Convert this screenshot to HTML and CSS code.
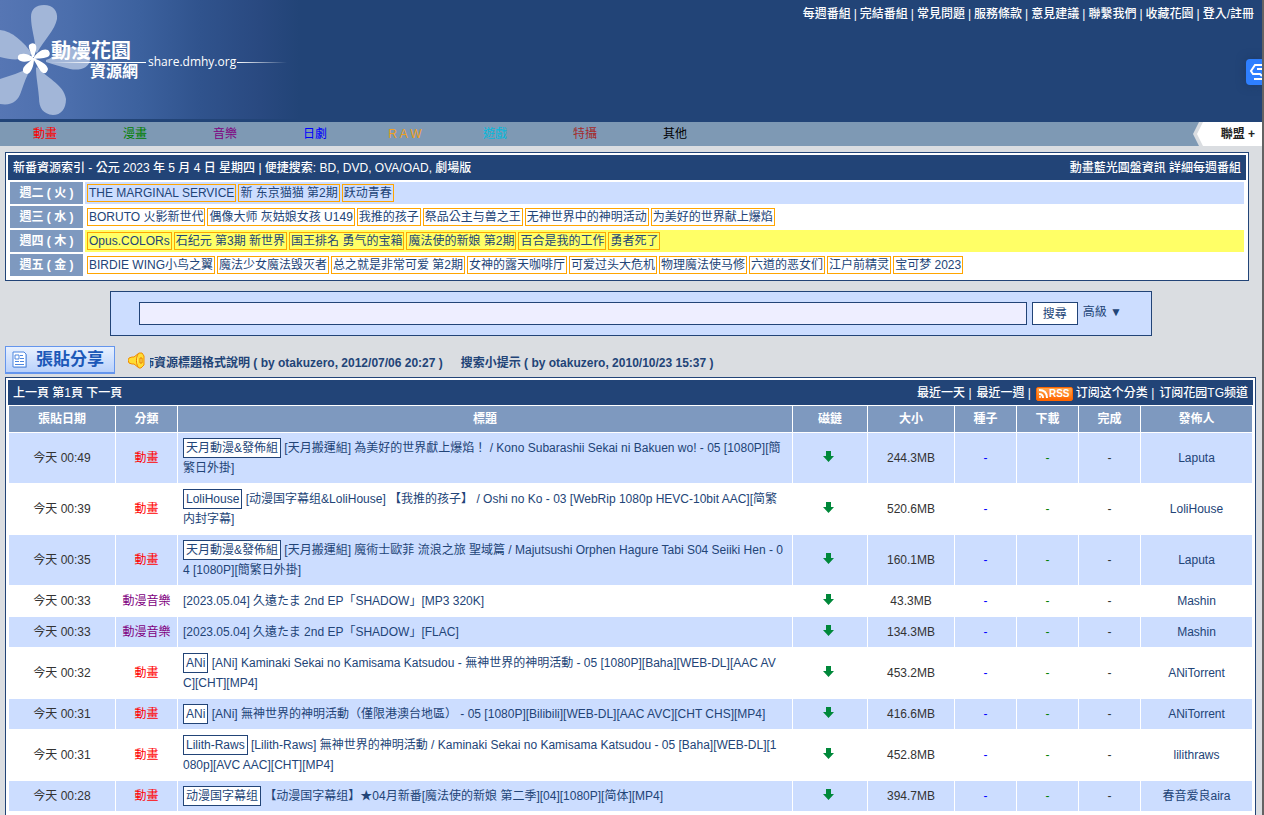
FILE: index.html
```html
<!DOCTYPE html>
<html lang="zh-Hant">
<head>
<meta charset="utf-8">
<title>動漫花園資源網</title>
<link rel="stylesheet" href="styles.css">
</head>
<body>
<header class="header">
  <a class="logo" href="#" aria-label="動漫花園資源網">
    <svg width="300" height="119" viewBox="0 0 300 119">
      <defs>
        <linearGradient id="fade"><stop offset="0" stop-color="#fff" stop-opacity="0"/><stop offset="1" stop-color="#fff"/></linearGradient>
        <linearGradient id="fadeout"><stop offset="0" stop-color="#fff"/><stop offset="1" stop-color="#fff" stop-opacity="0"/></linearGradient>
      </defs>
      <g fill="#a2b6d8">
        <path d="M36 52C35 38 31 28 31 17C31 9 36 5 44 5C53 5 58 11 57 19C55 30 44 40 37 53Z"/>
        <path d="M32 54C24 42 12 31 0 30V57C8 59 14 60 20 59Z"/>
        <path d="M29 68C21 72 10 76 0 79V104C12 106 18 101 21 92C24 83 27 75 31 68Z"/>
        <path d="M37 67C45 77 64 84 66 99C66 109 61 115 53 115C43 114 39 108 39 98C38 85 36 77 36 68Z"/>
        <path d="M46 60C56 57 62 46 74 47C84 48 90 54 90 60C89 68 80 71 70 69C61 67 53 64 46 62Z"/>
      </g>
      <g fill="#fff">
        <path d="M32 57C31 52 28 48 29 45Q32 42 35 44C38 47 35 53 34 57Z"/>
        <path d="M34 57C38 52 43 48 48 50Q51 53 49 56C45 59 39 58 34 59Z"/>
        <path d="M34 58C40 61 47 64 48 69Q47 74 43 73C39 71 37 64 33 59Z"/>
        <path d="M34 59C34 65 31 74 27 74Q22 73 23 69C24 65 30 62 33 58Z"/>
        <path d="M34 59C28 62 21 63 18 59Q17 54 22 54C27 53 31 56 34 58Z"/>
      </g>
      <rect x="48" y="62" width="44" height="1" fill="url(#fade)"/>
      <rect x="92" y="62" width="54" height="1" fill="#fff"/>
      <rect x="237" y="62" width="50" height="1" fill="url(#fadeout)"/>
      <text class="logo-name" x="51" y="58">動漫花園</text>
      <text class="logo-sub" x="90" y="77">資源網</text>
      <text class="logo-url" x="148" y="66">share.dmhy.org</text>
    </svg>
  </a>
  <nav class="toplinks"><a href="#">每週番組</a><span>|</span><a href="#">完結番組</a><span>|</span><a href="#">常見問題</a><span>|</span><a href="#">服務條款</a><span>|</span><a href="#">意見建議</a><span>|</span><a href="#">聯繫我們</a><span>|</span><a href="#">收藏花園</a><span>|</span><a href="#">登入/註冊</a></nav>
  <button class="float" aria-label="工具">
    <svg width="16" height="26" viewBox="0 0 16 26" fill="none" stroke="#fff" stroke-width="2"><path d="M16 6H9L5 12L7 15H14L16 17M16 20H8M16 10H11"/></svg>
  </button>
</header>
<nav class="menu">
  <a class="red" href="#">動畫</a><a class="green" href="#">漫畫</a><a class="purple" href="#">音樂</a><a class="blue" href="#">日劇</a><a class="orange" href="#">R A W</a><a class="cyan" href="#">遊戲</a><a class="brown" href="#">特攝</a><a class="black" href="#">其他</a>
  <a class="league" href="#"><span>聯盟 +</span></a>
</nav>

<section class="box index">
  <div class="bar"><div>新番資源索引 - 公元 2023 年 5 月 4 日 星期四 | 便捷搜索: <a href="#">BD</a>, <a href="#">DVD</a>, <a href="#">OVA/OAD</a>, <a href="#">劇場版</a></div><div><a href="#">動畫藍光圓盤資訊</a> <a href="#">詳細每週番組</a></div></div>
  <table class="week">
    <tr class="tinted"><th scope="row">週二 ( 火 )</th><td><div class="chips"><a href="#">THE MARGINAL SERVICE</a><a href="#">新 东京猫猫 第2期</a><a href="#">跃动青春</a></div></td></tr>
    <tr><th scope="row">週三 ( 水 )</th><td><div class="chips"><a href="#">BORUTO 火影新世代</a><a href="#">偶像大师 灰姑娘女孩 U149</a><a href="#">我推的孩子</a><a href="#">祭品公主与兽之王</a><a href="#">无神世界中的神明活动</a><a href="#">为美好的世界献上爆焰</a></div></td></tr>
    <tr class="today"><th scope="row">週四 ( 木 )</th><td><div class="chips"><a href="#">Opus.COLORs</a><a href="#">石纪元 第3期 新世界</a><a href="#">国王排名 勇气的宝箱</a><a href="#">魔法使的新娘 第2期</a><a href="#">百合是我的工作</a><a href="#">勇者死了</a></div></td></tr>
    <tr><th scope="row">週五 ( 金 )</th><td><div class="chips"><a href="#">BIRDIE WING小鸟之翼</a><a href="#">魔法少女魔法毁灭者</a><a href="#">总之就是非常可爱 第2期</a><a href="#">女神的露天咖啡厅</a><a href="#">可爱过头大危机</a><a href="#">物理魔法使马修</a><a href="#">六道的恶女们</a><a href="#">江户前精灵</a><a href="#">宝可梦 2023</a></div></td></tr>
  </table>
</section>

<form class="search">
  <input type="text" aria-label="搜尋關鍵字">
  <button type="button">搜尋</button>
  <a href="#">高級 ▼</a>
</form>

<div class="notice">
  <a class="share" href="#">
    <svg width="18" height="18" viewBox="0 0 18 18"><path d="M2 2H13L15 4V17H2Z" fill="#9db8e6"/><path d="M1 1H12L14 3V16H1Z" fill="#fff" stroke="#4c86e0"/><path d="M3 4H7V8H3ZM8 4.500H11M8 7.500H12M3 10.500H7M8 10.500H12M3 13.500H12" fill="none" stroke="#4c86e0"/></svg>
    <span>張貼分享</span>
  </a>
  <svg class="horn" width="17" height="17" viewBox="0 0 17 17"><path d="M1 6L4 5H6L11 1H14L16 4V13L13 16H11L6 12H4L1 11L0 8Z" fill="#fd3" stroke="#f08c00"/><path d="M10 2C8 6 8 11 10 15M12 6H14V11H12Z" fill="#fff36b" stroke="#e87800"/></svg>
  <div class="ticker"><a href="#">佈資源標題格式說明 ( by otakuzero, 2012/07/06 20:27 )</a><a href="#">搜索小提示 ( by otakuzero, 2010/10/23 15:37 )</a></div>
</div>

<main class="box list">
  <div class="bar"><div><a href="#">上一頁</a> 第1頁 <a href="#">下一頁</a></div>
    <div class="feeds"><span><a href="#">最近一天</a> |</span><span><a href="#">最近一週</a> |</span><span><a href="#"><span class="rss"><svg width="9" height="9" viewBox="0 0 9 9" fill="none" stroke="#fff" stroke-width="2"><path d="M0 1C5 1 8 4 8 9M0 5Q4 5 4 9"/><circle cx="1" cy="8" r="1" fill="#fff" stroke="none"/></svg>RSS</span> 订阅这个分类</a> |</span><a href="#">订阅花园TG频道</a></div></div>
  <table class="topics">
    <colgroup><col class="c-date"><col class="c-kind"><col><col class="c-magnet"><col class="c-size"><col class="c-num"><col class="c-num"><col class="c-num"><col class="c-user"></colgroup>
    <thead><tr><th>張貼日期</th><th>分類</th><th>標題</th><th>磁鏈</th><th>大小</th><th>種子</th><th>下載</th><th>完成</th><th>發佈人</th></tr></thead>
    <tbody>
      <tr><td>今天 00:49</td><td><a class="red" href="#">動畫</a></td><td class="title"><a class="tag" href="#">天月動漫&amp;發佈組</a> <a href="#">[天月搬運組] 為美好的世界獻上爆焰！ / Kono Subarashii Sekai ni Bakuen wo! - 05 [1080P][簡繁日外掛]</a></td><td><a class="magnet" href="#" aria-label="磁鏈"><svg width="11" height="11" viewBox="0 0 11 11"><path d="M3 0H8V5H11L5.500 11L0 5H3Z"/></svg></a></td><td>244.3MB</td><td class="blue">-</td><td class="green">-</td><td>-</td><td><a href="#">Laputa</a></td></tr>
      <tr><td>今天 00:39</td><td><a class="red" href="#">動畫</a></td><td class="title"><a class="tag" href="#">LoliHouse</a> <a href="#">[动漫国字幕组&amp;LoliHouse] 【我推的孩子】 / Oshi no Ko - 03 [WebRip 1080p HEVC-10bit AAC][简繁内封字幕]</a></td><td><a class="magnet" href="#" aria-label="磁鏈"><svg width="11" height="11" viewBox="0 0 11 11"><path d="M3 0H8V5H11L5.500 11L0 5H3Z"/></svg></a></td><td>520.6MB</td><td class="blue">-</td><td class="green">-</td><td>-</td><td><a href="#">LoliHouse</a></td></tr>
      <tr><td>今天 00:35</td><td><a class="red" href="#">動畫</a></td><td class="title"><a class="tag" href="#">天月動漫&amp;發佈組</a> <a href="#">[天月搬運組] 魔術士歐菲 流浪之旅 聖域篇 / Majutsushi Orphen Hagure Tabi S04 Seiiki Hen - 04 [1080P][簡繁日外掛]</a></td><td><a class="magnet" href="#" aria-label="磁鏈"><svg width="11" height="11" viewBox="0 0 11 11"><path d="M3 0H8V5H11L5.500 11L0 5H3Z"/></svg></a></td><td>160.1MB</td><td class="blue">-</td><td class="green">-</td><td>-</td><td><a href="#">Laputa</a></td></tr>
      <tr><td>今天 00:33</td><td><a class="purple" href="#">動漫音樂</a></td><td class="title"><a href="#">[2023.05.04] 久遠たま 2nd EP「SHADOW」[MP3 320K]</a></td><td><a class="magnet" href="#" aria-label="磁鏈"><svg width="11" height="11" viewBox="0 0 11 11"><path d="M3 0H8V5H11L5.500 11L0 5H3Z"/></svg></a></td><td>43.3MB</td><td class="blue">-</td><td class="green">-</td><td>-</td><td><a href="#">Mashin</a></td></tr>
      <tr><td>今天 00:33</td><td><a class="purple" href="#">動漫音樂</a></td><td class="title"><a href="#">[2023.05.04] 久遠たま 2nd EP「SHADOW」[FLAC]</a></td><td><a class="magnet" href="#" aria-label="磁鏈"><svg width="11" height="11" viewBox="0 0 11 11"><path d="M3 0H8V5H11L5.500 11L0 5H3Z"/></svg></a></td><td>134.3MB</td><td class="blue">-</td><td class="green">-</td><td>-</td><td><a href="#">Mashin</a></td></tr>
      <tr><td>今天 00:32</td><td><a class="red" href="#">動畫</a></td><td class="title"><a class="tag" href="#">ANi</a> <a href="#">[ANi] Kaminaki Sekai no Kamisama Katsudou - 無神世界的神明活動 - 05 [1080P][Baha][WEB-DL][AAC AVC][CHT][MP4]</a></td><td><a class="magnet" href="#" aria-label="磁鏈"><svg width="11" height="11" viewBox="0 0 11 11"><path d="M3 0H8V5H11L5.500 11L0 5H3Z"/></svg></a></td><td>453.2MB</td><td class="blue">-</td><td class="green">-</td><td>-</td><td><a href="#">ANiTorrent</a></td></tr>
      <tr><td>今天 00:31</td><td><a class="red" href="#">動畫</a></td><td class="title"><a class="tag" href="#">ANi</a> <a href="#">[ANi] 無神世界的神明活動（僅限港澳台地區） - 05 [1080P][Bilibili][WEB-DL][AAC AVC][CHT CHS][MP4]</a></td><td><a class="magnet" href="#" aria-label="磁鏈"><svg width="11" height="11" viewBox="0 0 11 11"><path d="M3 0H8V5H11L5.500 11L0 5H3Z"/></svg></a></td><td>416.6MB</td><td class="blue">-</td><td class="green">-</td><td>-</td><td><a href="#">ANiTorrent</a></td></tr>
      <tr><td>今天 00:31</td><td><a class="red" href="#">動畫</a></td><td class="title"><a class="tag" href="#">Lilith-Raws</a> <a href="#">[Lilith-Raws] 無神世界的神明活動 / Kaminaki Sekai no Kamisama Katsudou - 05 [Baha][WEB-DL][1<br>080p][AVC AAC][CHT][MP4]</a></td><td><a class="magnet" href="#" aria-label="磁鏈"><svg width="11" height="11" viewBox="0 0 11 11"><path d="M3 0H8V5H11L5.500 11L0 5H3Z"/></svg></a></td><td>452.8MB</td><td class="blue">-</td><td class="green">-</td><td>-</td><td><a href="#">lilithraws</a></td></tr>
      <tr><td>今天 00:28</td><td><a class="red" href="#">動畫</a></td><td class="title"><a class="tag" href="#">动漫国字幕组</a> <a href="#">【动漫国字幕组】★04月新番[魔法使的新娘 第二季][04][1080P][简体][MP4]</a></td><td><a class="magnet" href="#" aria-label="磁鏈"><svg width="11" height="11" viewBox="0 0 11 11"><path d="M3 0H8V5H11L5.500 11L0 5H3Z"/></svg></a></td><td>394.7MB</td><td class="blue">-</td><td class="green">-</td><td>-</td><td><a href="#">春音爱良aira</a></td></tr>
    </tbody>
  </table>
</main>
</body>
</html>
```
FILE: styles.css
```css
* { box-sizing: border-box; }
body {
  margin: 0;
  height: 100vh;
  overflow: hidden;
  border-right: 2px solid #636363;
  background: #dadde1;
  color: #333;
  font: 12px/20px "Liberation Sans", "Noto Sans CJK TC", sans-serif;
}
a { color: #247; text-decoration: none; }
svg { display: block; }
input, button { font: inherit; color: #247; }
table { width: 100%; }

.header {
  position: relative;
  display: flex;
  justify-content: space-between;
  align-items: flex-start;
  height: 122px;
  background: #247;
}
.logo { background: linear-gradient(90deg, #5676b4 0, #4b6eac 70px, #3c619e 140px, #30538d 200px, #294980 260px, #247 300px); }
.logo text { fill: #fff; font-family: "Noto Sans CJK TC", sans-serif; }
.logo .logo-name { font-size: 20px; font-weight: bold; }
.logo .logo-sub { font-size: 16px; font-weight: bold; }
.logo .logo-url { font-family: "Open Sans", sans-serif; font-size: 12px; }
.toplinks { display: flex; gap: 3px; padding: 4px 8px 0 0; color: #fff; font-weight: 500; }
.toplinks a { color: #fff; }
.float {
  position: absolute;
  right: 0;
  top: 59px;
  width: 16px;
  height: 26px;
  padding: 0;
  border: 0;
  border-radius: 4px 0 0 4px;
  background: #2e7fff;
  box-shadow: 0 0 10px #1d3a66;
}

.menu { display: flex; height: 24px; background: #7e99b4; line-height: 24px; }
.menu a { width: 90px; text-align: center; }
.menu .league { width: 69px; margin-left: auto; padding-left: 4px; background: #dadde1; clip-path: polygon(6px 0, 100% 0, 100% 100%, 6px 100%, 0 50%); }
.league span {
  display: block;
  padding-right: 7px;
  background: #fff;
  color: #222;
  font-weight: bold;
  text-align: right;
  clip-path: polygon(6px 0, 100% 0, 100% 100%, 6px 100%, 0 50%);
}
.red, a.red { color: #f00; }
.green, a.green { color: #008000; }
.purple, a.purple { color: #800080; }
.blue, a.blue { color: #00f; }
a.orange { color: #f0a020; }
a.cyan { color: #0bd; }
a.brown { color: #a52a2a; }
a.black { color: #000; }

.box { border: 1px solid #247; padding: 2px; background: #fff; }
.bar { display: flex; justify-content: space-between; height: 25px; padding: 0 5px; background: #247; color: #fff; line-height: 27px; font-weight: 500; }
.bar a { color: #fff; }

.index { margin: 6px 13px 0 5px; }
.week { border-spacing: 2px; }
.week th { width: 73px; height: 22px; padding: 0; background: #7e99bf; color: #fff; white-space: nowrap; }
.week td { padding: 0 2px; }
.tinted td { background: #cdf; }
.today td { background: #ff6; }
.chips { display: flex; gap: 2px; }
.chips a { border: 1px solid orange; padding: 0 1px; line-height: 16px; white-space: nowrap; }

.search {
  display: flex;
  align-items: flex-start;
  gap: 5px;
  height: 45px;
  margin: 10px 110px 0;
  padding: 10px 29px 0 28px;
  border: 1px solid #247;
  background: #cdf;
}
.search input { flex: 1; height: 23px; border: 1px solid #247; background: #eef; }
.search button { width: 46px; height: 23px; padding: 0; border: 1px solid #247; background: #fff; }

.notice { display: flex; align-items: center; height: 28px; margin: 10px 5px 3px; font-weight: bold; }
.share {
  display: flex;
  align-items: center;
  gap: 6px;
  width: 110px;
  height: 28px;
  padding-left: 6px;
  border: 1px solid #6495ed;
  border-bottom-width: 2px;
  background: linear-gradient(#e8f1ff, #b9d1fb);
  color: #1c58b8;
  font-size: 17px;
}
.horn { margin-left: 13px; }
.ticker { display: flex; gap: 18px; flex: 1; margin-left: 5px; padding-top: 5px; overflow: hidden; white-space: nowrap; }
.ticker a:first-child { margin-left: -8px; }

.list { margin: 0 6px 0 5px; padding-bottom: 40px; }
.feeds { display: flex; gap: 5px; }
.rss {
  display: inline-flex;
  align-items: center;
  gap: 1px;
  height: 14px;
  padding: 0 2px;
  border: 1px solid #f60;
  border-radius: 2px;
  background: linear-gradient(#ffa64d, #f60);
  font: bold 10px/12px "Liberation Sans", sans-serif;
  vertical-align: middle;
}
.topics { table-layout: fixed; border-spacing: 1px; }
.c-date { width: 106px; }
.c-kind { width: 61px; }
.c-magnet { width: 74px; }
.c-size { width: 86px; }
.c-num { width: 61px; }
.c-user { width: 111px; }
.topics th { height: 26px; padding: 0; background: #7e99bf; color: #fff; }
.topics td { padding: 5px 0; text-align: center; }
.topics .title { padding: 5px; text-align: left; word-break: break-all; }
.topics tbody tr:nth-child(odd) td { background: #cdf; }
.tag { display: inline-block; padding: 0 2px; border: 1px solid #247; background: #fff; line-height: 18px; vertical-align: top; }
.magnet { display: block; padding: 0 3px 3px 0; }
.magnet svg { margin: 0 auto; fill: #00883a; }
```
